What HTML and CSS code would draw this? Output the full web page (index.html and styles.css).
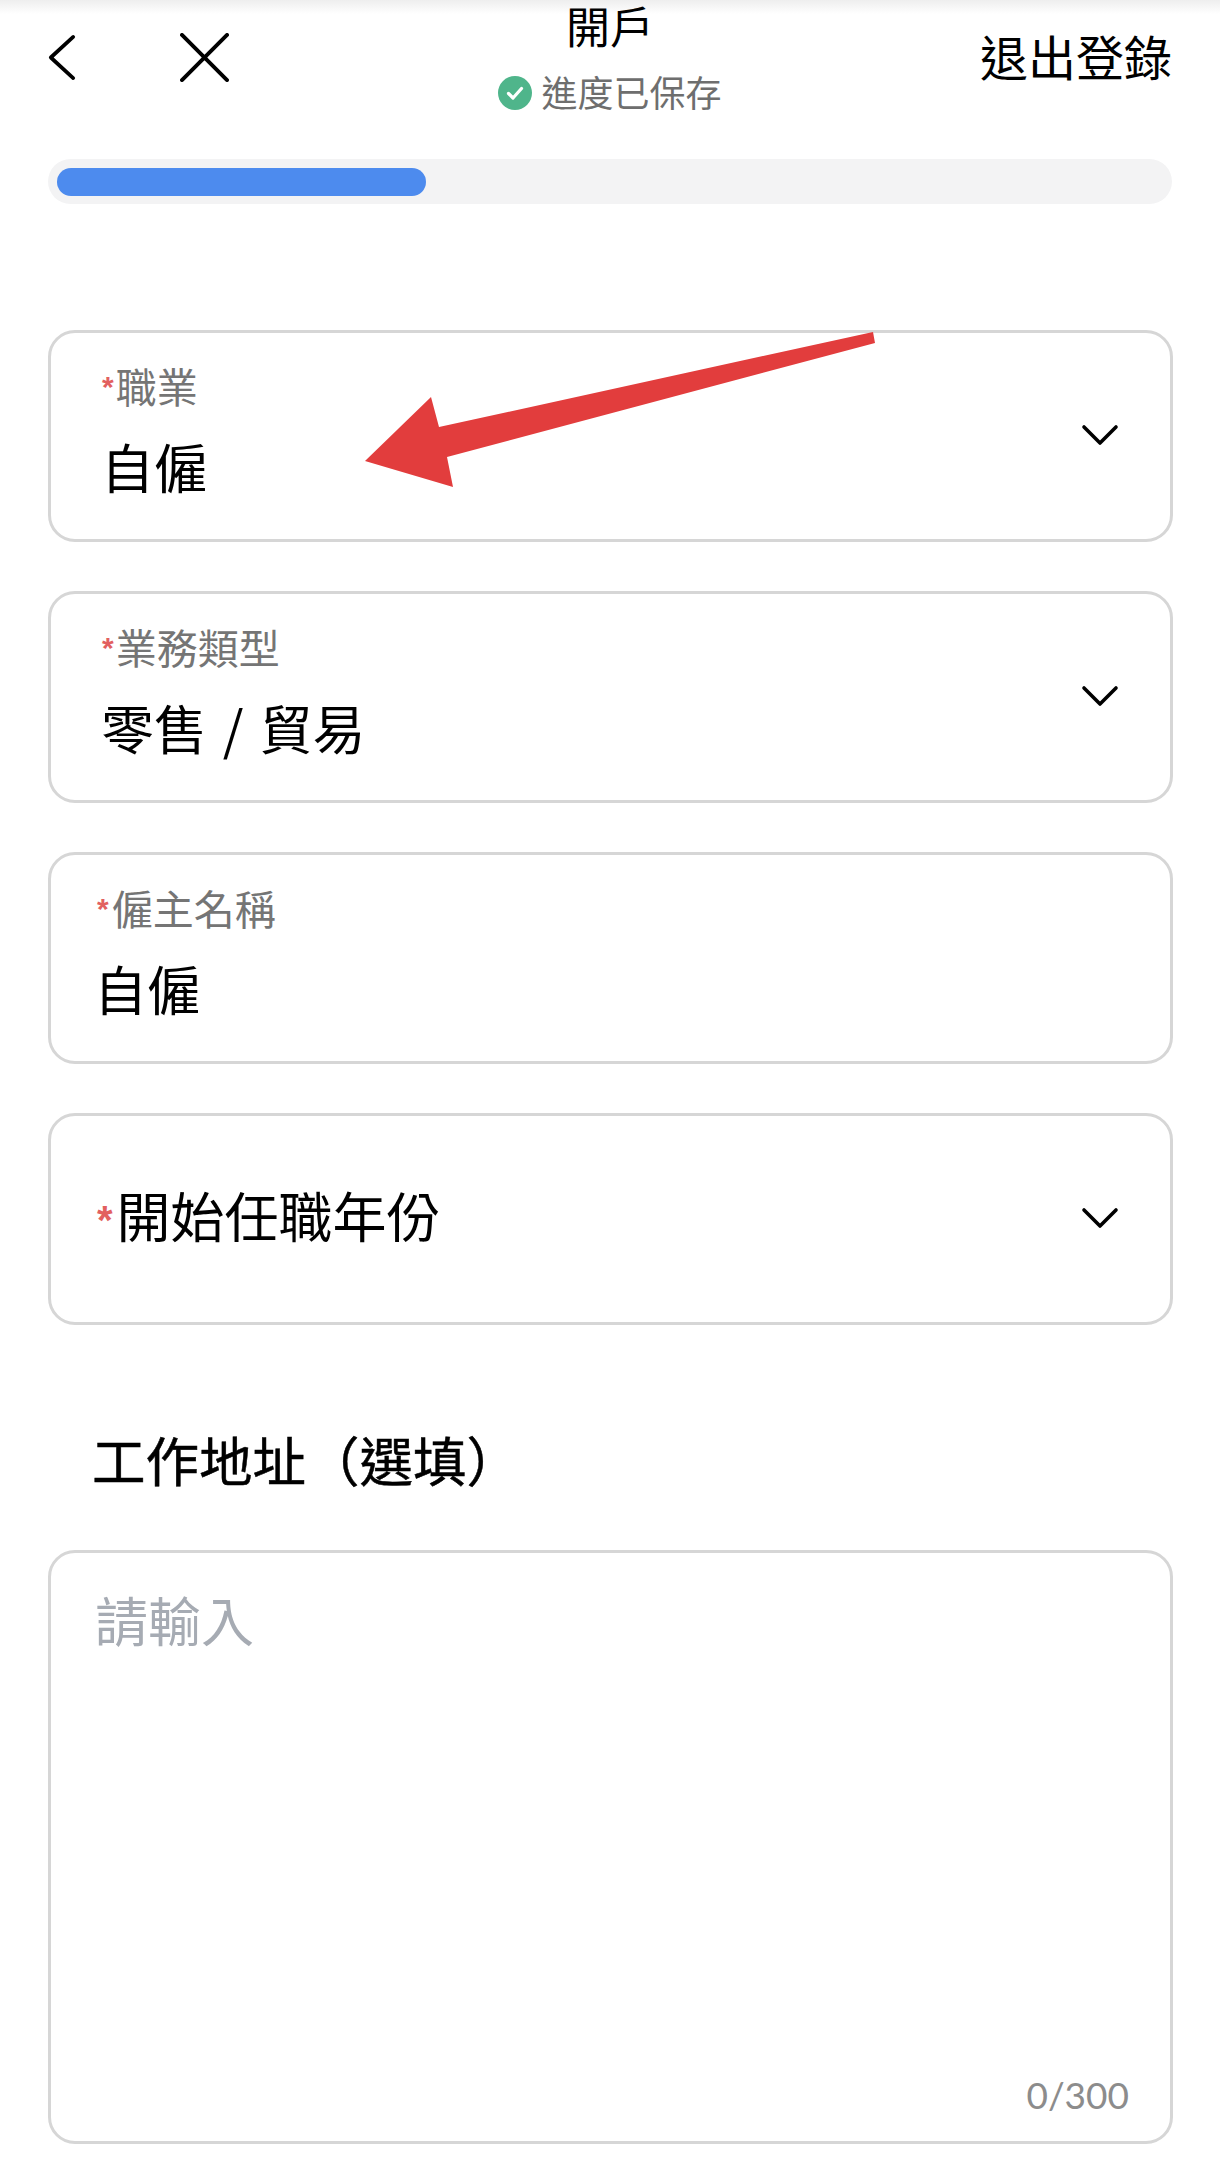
FILE: index.html
```
<!DOCTYPE html>
<html lang="zh-Hant">
<head>
<meta charset="utf-8">
<title>開戶</title>
<link rel="stylesheet" href="styles.css">
</head>
<body>
<div class="page">
  <header class="topbar">
    <div class="nav-icons">
      <svg class="icon-back" viewBox="0 0 30 50"><path d="M27 3 L3 25 L27 47"/></svg>
      <svg class="icon-close" viewBox="0 0 50 50"><path d="M2 2 L48 48 M48 2 L2 48"/></svg>
    </div>
    <div class="title-block">
      <div class="title">開戶</div>
      <div class="saved">
        <svg class="icon-check" viewBox="0 0 34 34"><circle cx="17" cy="17" r="17"/><path d="M10.5 17.5 L15 22 L23.5 12.5"/></svg>
        <span>進度已保存</span>
      </div>
    </div>
    <div class="logout">退出登錄</div>
  </header>

  <div class="progress"><div class="progress-fill"></div></div>

  <main class="form">
    <div class="field">
      <div class="field-body pad-a">
        <div class="label"><span class="star">*</span>職業</div>
        <div class="value">自僱</div>
      </div>
      <svg class="chevron" viewBox="0 0 38 22"><path d="M3 3 L19 19 L35 3"/></svg>
    </div>
    <div class="field">
      <div class="field-body pad-a">
        <div class="label"><span class="star">*</span>業務類型</div>
        <div class="value">零售 / 貿易</div>
      </div>
      <svg class="chevron" viewBox="0 0 38 22"><path d="M3 3 L19 19 L35 3"/></svg>
    </div>
    <div class="field">
      <div class="field-body pad-b">
        <div class="label"><span class="star">*</span>僱主名稱</div>
        <div class="value">自僱</div>
      </div>
    </div>
    <div class="field">
      <div class="field-empty">
        <span class="star star-large">*</span>開始任職年份
      </div>
      <svg class="chevron" viewBox="0 0 38 22"><path d="M3 3 L19 19 L35 3"/></svg>
    </div>

    <h2 class="section-title">工作地址（選填）</h2>

    <div class="textarea">
      <div class="placeholder">請輸入</div>
      <div class="counter">0/300</div>
    </div>
  </main>

  <svg class="annotation" viewBox="0 0 1220 2176"><polygon points="873,332 439,427 431,397 365,461 453,487 447,457 875,343"/></svg>
</div>
</body>
</html>
```

FILE: styles.css
```
* { box-sizing: border-box; }

html, body { margin: 0; padding: 0; background: #fff; }

body {
  font-family: "Noto Sans CJK TC", "Noto Sans", "Liberation Sans", sans-serif;
  color: #000;
}

.page {
  position: relative;
  width: 1220px;
  height: 2176px;
  overflow: hidden;
  background: linear-gradient(#eeeeee 0, #ffffff 14px) no-repeat;
}

.topbar {
  display: grid;
  grid-template-columns: 1fr auto 1fr;
  padding: 0 48px;
  height: 159px;
}

.nav-icons {
  display: flex;
  align-items: flex-start;
  gap: 104px;
  padding-top: 33px;
}

.icon-back { width: 28px; height: 49px; }
.icon-close { width: 49px; height: 49px; }

.icon-back path, .icon-close path {
  fill: none;
  stroke: #000;
  stroke-width: 4;
  stroke-linecap: round;
  stroke-linejoin: round;
}

.title-block { display: flex; flex-direction: column; align-items: center; }

.title { font-size: 44px; line-height: 50px; }

.saved {
  display: flex;
  align-items: center;
  gap: 9px;
  margin-top: 21px;
  font-size: 36px;
  line-height: 40px;
  color: #6e6e6e;
}

.icon-check { width: 34px; height: 34px; margin-top: 3px; }
.icon-check circle { fill: #4fb58b; }
.icon-check path { fill: none; stroke: #fff; stroke-width: 3.2; stroke-linecap: round; stroke-linejoin: round; }

.logout {
  justify-self: end;
  margin-top: 29px;
  font-size: 48px;
  line-height: 52px;
}

.progress {
  margin: 0 48px;
  height: 45px;
  padding: 9px;
  border-radius: 23px;
  background: #f3f3f4;
}

.progress-fill {
  width: 369px;
  height: 28px;
  border-radius: 14px;
  background: #4d8bee;
}

.form {
  display: flex;
  flex-direction: column;
  gap: 49px;
  margin: 126px 47px 0 48px;
}

.field {
  display: flex;
  align-items: center;
  justify-content: space-between;
  height: 212px;
  padding-right: 51px;
  border: 3px solid #d6d6d6;
  border-radius: 27px;
}

.field-body { margin-bottom: 17px; }
.pad-a { padding-left: 50px; }
.pad-a .label { margin-left: 1px; }
.pad-b { padding-left: 43px; }
.pad-b .label { margin-left: 3px; }
.pad-b .star { margin-right: 3px; }

.label {
  font-size: 41px;
  line-height: 50px;
  color: #757575;
}

.star {
  color: #e2605f;
  font-family: "Liberation Sans", sans-serif;
  font-size: 30px;
  font-weight: 700;
  position: relative;
  top: -6px;
  margin-right: 2px;
}

.star-large { font-size: 40px; top: -4px; margin-right: 4px; }

.value {
  margin-top: 18px;
  font-size: 53px;
  line-height: 60px;
  word-spacing: 4px;
}

.field-empty {
  padding-left: 46px;
  font-size: 54px;
  line-height: 60px;
}

.chevron { width: 38px; height: 22px; margin-bottom: 3px; }

.chevron path {
  fill: none;
  stroke: #000;
  stroke-width: 3.6;
  stroke-linecap: round;
  stroke-linejoin: round;
}

.section-title {
  margin: 55px 0 12px 44px;
  font-size: 53.5px;
  font-weight: 400;
  line-height: 60px;
  -webkit-text-stroke: 0.5px #000;
}

.textarea {
  display: flex;
  flex-direction: column;
  justify-content: space-between;
  height: 594px;
  padding: 36px 41px 23px 44px;
  border: 3px solid #d6d6d6;
  border-radius: 27px;
}

.placeholder {
  font-size: 53px;
  line-height: 60px;
  color: #a6abb3;
}

.counter {
  align-self: flex-end;
  font-family: Lato, "Noto Sans", sans-serif;
  font-size: 37px;
  font-weight: 400;
  line-height: 46px;
  color: #8c8c8c;
}

.annotation {
  position: absolute;
  top: 0;
  left: 0;
  width: 1220px;
  height: 2176px;
  pointer-events: none;
}

.annotation polygon { fill: #e23d3d; }
```
